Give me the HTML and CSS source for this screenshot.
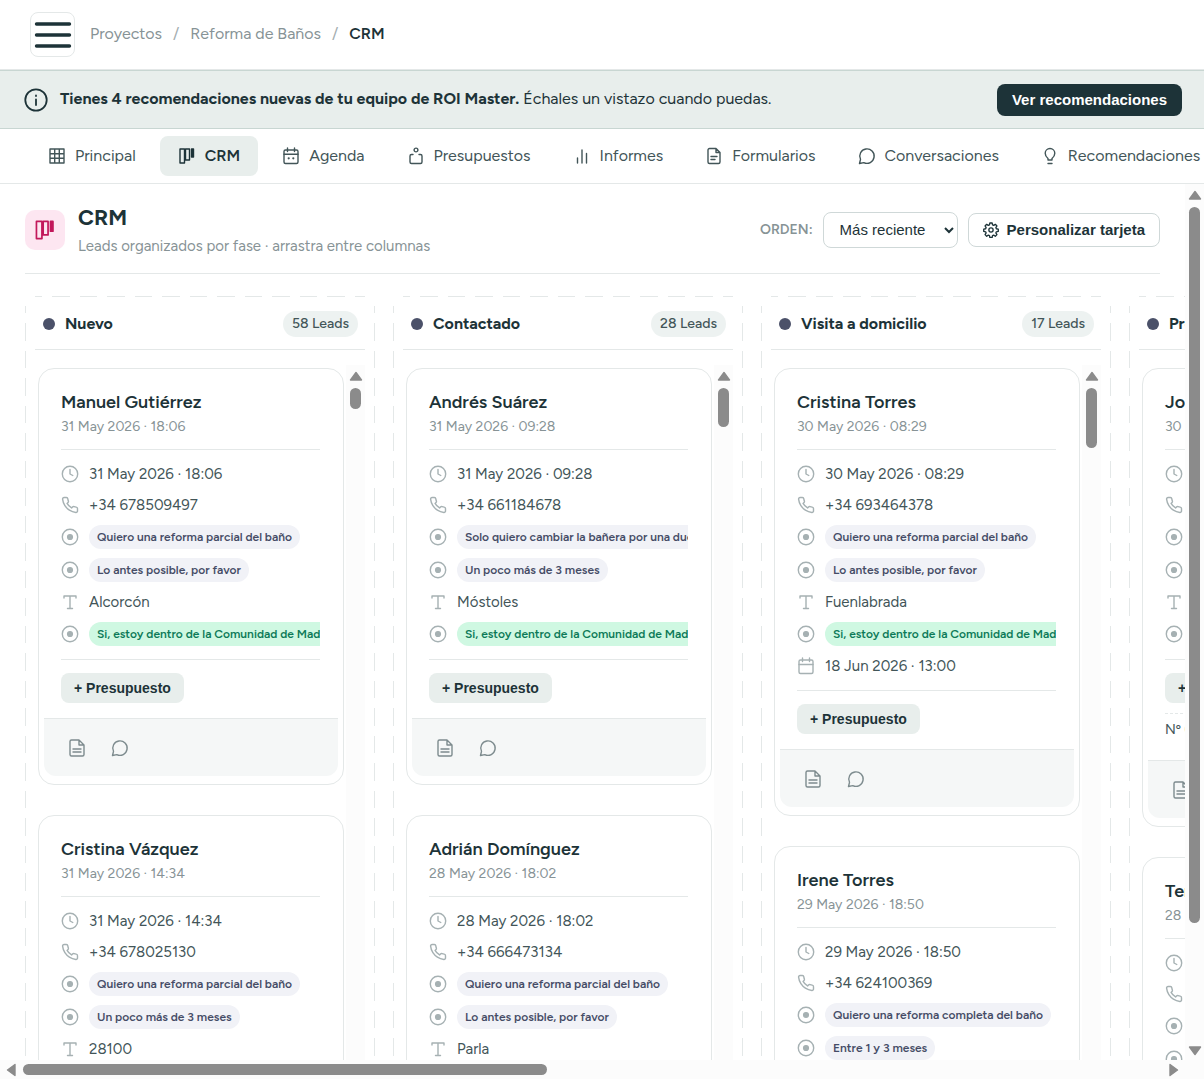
FILE: index.html
```html
<!DOCTYPE html>
<html lang="es">
<head>
<meta charset="utf-8">
<meta name="viewport" content="width=device-width, initial-scale=1">
<title>CRM · Reforma de Baños</title>
<link rel="stylesheet" href="styles.css">
</head>
<body>
<svg class="sprite" aria-hidden="true">
  <symbol id="i-grid" viewBox="0 0 18 18"><path d="M2 2h14v14H2zM2 6.700h14M2 11.300h14M6.700 2v14M11.300 2v14"/></symbol>
  <symbol id="i-board" viewBox="0 0 18 18"><path d="M2 2h4.500v14H2zM7.500 2h4v11h-4z"/><path class="solid" d="M13.500 2h2v8h-2z"/></symbol>
  <symbol id="i-agenda" viewBox="0 0 18 18"><rect x="2" y="3" width="14" height="13.500" rx="1.500"/><path d="M2 7.200h14M5.500 1v3.500M12.500 1v3.500"/><path class="dots" d="M6.700 11.300h.01M11.300 11.300h.01"/></symbol>
  <symbol id="i-budget" viewBox="0 0 18 18"><circle cx="9" cy="3" r="1.900"/><path d="M6 7.500H4.500a1.500 1.500 0 0 0-1.500 1.500v6a1.500 1.500 0 0 0 1.500 1.500h9a1.500 1.500 0 0 0 1.500-1.500v-6a1.500 1.500 0 0 0-1.500-1.500H12"/></symbol>
  <symbol id="i-chart" viewBox="0 0 18 18"><path d="M4.500 11v5M9 3v13M13.500 6.500V16"/></symbol>
  <symbol id="i-doc" viewBox="0 0 18 18"><path d="M11 1.500H4.500A1.500 1.500 0 0 0 3 3v12a1.500 1.500 0 0 0 1.500 1.500h9A1.500 1.500 0 0 0 15 15V5.500zM11 1.500v4h4M6 9.500h6M6 12.500h4"/></symbol>
  <symbol id="i-file" viewBox="0 0 18 18"><path d="M11 1H3.500A1.500 1.500 0 0 0 2 2.500v13A1.500 1.500 0 0 0 3.500 17h11a1.500 1.500 0 0 0 1.500-1.500V6zM11 1v5h5M5 10h8M5 13h8"/></symbol>
  <symbol id="i-chat" viewBox="0 0 18 18"><path d="M1.500 16.500l1-4.200A7.200 7.200 0 1 1 5.800 15.600z"/></symbol>
  <symbol id="i-bulb" viewBox="0 0 18 18"><path d="M7 13v-1.500C5.500 10.300 4.200 8.700 4.200 6.300a4.800 4.800 0 0 1 9.600 0c0 2.400-1.300 4-2.800 5.200V13zM7 16.500h4"/></symbol>
  <symbol id="i-info" viewBox="0 0 24 24"><circle cx="12" cy="12" r="10.700"/><path d="M12 11.500v5.500M12 7.500v.5"/></symbol>
  <symbol id="i-menu" viewBox="0 0 38 38"><path d="M2.500 8h33M2.500 19h33M2.500 30h33"/></symbol>
  <symbol id="i-clock" viewBox="0 0 18 18"><circle cx="9" cy="9" r="7.700"/><path d="M9 4.500V9l2.800 1.500"/></symbol>
  <symbol id="i-phone" viewBox="0 0 24 24"><path class="bold" d="M22 16.920v3a2 2 0 0 1-2.180 2 19.790 19.790 0 0 1-8.630-3.070 19.500 19.500 0 0 1-6-6 19.790 19.790 0 0 1-3.070-8.670A2 2 0 0 1 4.110 2h3a2 2 0 0 1 2 1.720 12.840 12.840 0 0 0 .7 2.810 2 2 0 0 1-.45 2.110L8.090 9.910a16 16 0 0 0 6 6l1.270-1.270a2 2 0 0 1 2.110-.45 12.840 12.840 0 0 0 2.810.7A2 2 0 0 1 22 16.920z"/></symbol>
  <symbol id="i-radio" viewBox="0 0 18 18"><circle cx="9" cy="9" r="7.700"/><circle class="solid" cx="9" cy="9" r="2.400"/></symbol>
  <symbol id="i-type" viewBox="0 0 18 18"><path d="M3 5V3h12v2M9 3v12.500M6.500 15.500h5"/></symbol>
  <symbol id="i-date" viewBox="0 0 18 18"><rect x="2" y="3" width="14" height="13.500" rx="1.500"/><path d="M2 7.500h14M5.500 1v3.500M12.500 1v3.500"/></symbol>
  <symbol id="i-gear" viewBox="0 0 24 24"><circle cx="12" cy="12" r="3.200"/><path d="M10.300 1.500h3.400l.6 2.900 1.700.7 2.500-1.600 2.400 2.400-1.600 2.500.7 1.700 2.900.6v3.400l-2.900.6-.7 1.700 1.600 2.500-2.400 2.400-2.500-1.600-1.700.7-.6 2.900h-3.400l-.6-2.900-1.700-.7-2.500 1.600-2.400-2.400 1.600-2.500-.7-1.700-2.900-.6v-3.400l2.900-.6.7-1.700-1.600-2.500 2.400-2.400L8 5.100l1.700-.7z"/></symbol>
  <symbol id="i-arrow" viewBox="0 0 14 10"><path d="M7 1.500L12.500 9h-11z"/></symbol>
</svg>

<header class="topbar">
  <button class="menu-btn" type="button" aria-label="Menú"><svg><use href="#i-menu"/></svg></button>
  <nav class="crumbs" aria-label="Ruta">
    <a href="#">Proyectos</a><span class="sep">/</span><a href="#">Reforma de Baños</a><span class="sep">/</span><strong>CRM</strong>
  </nav>
</header>

<section class="notice">
  <svg class="notice-icon"><use href="#i-info"/></svg>
  <p><strong>Tienes 4 recomendaciones nuevas de tu equipo de ROI Master.</strong> Échales un vistazo cuando puedas.</p>
  <button class="btn-dark" type="button">Ver recomendaciones</button>
</section>

<nav class="tabs" aria-label="Secciones">
  <a href="#"><svg><use href="#i-grid"/></svg>Principal</a>
  <a href="#" class="active" aria-current="page"><svg><use href="#i-board"/></svg>CRM</a>
  <a href="#"><svg><use href="#i-agenda"/></svg>Agenda</a>
  <a href="#"><svg><use href="#i-budget"/></svg>Presupuestos</a>
  <a href="#"><svg><use href="#i-chart"/></svg>Informes</a>
  <a href="#"><svg><use href="#i-doc"/></svg>Formularios</a>
  <a href="#"><svg><use href="#i-chat"/></svg>Conversaciones</a>
  <a href="#"><svg><use href="#i-bulb"/></svg>Recomendaciones</a>
</nav>

<div class="workspace">
  <main class="view">
    <header class="page-head">
      <span class="page-icon"><svg><use href="#i-board"/></svg></span>
      <div class="page-title">
        <h1>CRM</h1>
        <p>Leads organizados por fase · arrastra entre columnas</p>
      </div>
      <div class="page-tools">
        <label for="orden">ORDEN:</label>
        <select id="orden"><option>Más reciente</option><option>Más antiguo</option></select>
        <button class="btn-light" type="button"><svg><use href="#i-gear"/></svg>Personalizar tarjeta</button>
      </div>
    </header>

    <div class="board">
      <section class="column">
        <header class="column-head"><span class="dot"></span><h2>Nuevo</h2><span class="count">58 Leads</span></header>
        <div class="column-body">
          <div class="cards">
            <article class="card">
              <div class="card-main">
                <h3>Manuel Gutiérrez</h3>
                <p class="when">31 May 2026 · 18:06</p>
                <ul class="fields">
                  <li><svg><use href="#i-clock"/></svg>31 May 2026 · 18:06</li>
                  <li><svg><use href="#i-phone"/></svg>+34 678509497</li>
                  <li><svg><use href="#i-radio"/></svg><span class="pill">Quiero una reforma parcial del baño</span></li>
                  <li><svg><use href="#i-radio"/></svg><span class="pill">Lo antes posible, por favor</span></li>
                  <li><svg><use href="#i-type"/></svg>Alcorcón</li>
                  <li><svg><use href="#i-radio"/></svg><span class="pill green">Si, estoy dentro de la Comunidad de Madrid</span></li>
                </ul>
                <div class="quote"><button type="button">+ Presupuesto</button></div>
              </div>
              <footer class="card-foot"><button type="button" aria-label="Notas"><svg><use href="#i-file"/></svg></button><button type="button" aria-label="Chat"><svg><use href="#i-chat"/></svg></button></footer>
            </article>
            <article class="card">
              <div class="card-main">
                <h3>Cristina Vázquez</h3>
                <p class="when">31 May 2026 · 14:34</p>
                <ul class="fields">
                  <li><svg><use href="#i-clock"/></svg>31 May 2026 · 14:34</li>
                  <li><svg><use href="#i-phone"/></svg>+34 678025130</li>
                  <li><svg><use href="#i-radio"/></svg><span class="pill">Quiero una reforma parcial del baño</span></li>
                  <li><svg><use href="#i-radio"/></svg><span class="pill">Un poco más de 3 meses</span></li>
                  <li><svg><use href="#i-type"/></svg>28100</li>
                </ul>
              </div>
            </article>
          </div>
          <div class="scroll-v" aria-hidden="true"><svg class="arrow"><use href="#i-arrow"/></svg><div class="track"><div class="thumb" style="height:21px"></div></div></div>
        </div>
      </section>

      <section class="column">
        <header class="column-head"><span class="dot"></span><h2>Contactado</h2><span class="count">28 Leads</span></header>
        <div class="column-body">
          <div class="cards">
            <article class="card">
              <div class="card-main">
                <h3>Andrés Suárez</h3>
                <p class="when">31 May 2026 · 09:28</p>
                <ul class="fields">
                  <li><svg><use href="#i-clock"/></svg>31 May 2026 · 09:28</li>
                  <li><svg><use href="#i-phone"/></svg>+34 661184678</li>
                  <li><svg><use href="#i-radio"/></svg><span class="pill">Solo quiero cambiar la bañera por una ducha</span></li>
                  <li><svg><use href="#i-radio"/></svg><span class="pill">Un poco más de 3 meses</span></li>
                  <li><svg><use href="#i-type"/></svg>Móstoles</li>
                  <li><svg><use href="#i-radio"/></svg><span class="pill green">Si, estoy dentro de la Comunidad de Madrid</span></li>
                </ul>
                <div class="quote"><button type="button">+ Presupuesto</button></div>
              </div>
              <footer class="card-foot"><button type="button" aria-label="Notas"><svg><use href="#i-file"/></svg></button><button type="button" aria-label="Chat"><svg><use href="#i-chat"/></svg></button></footer>
            </article>
            <article class="card">
              <div class="card-main">
                <h3>Adrián Domínguez</h3>
                <p class="when">28 May 2026 · 18:02</p>
                <ul class="fields">
                  <li><svg><use href="#i-clock"/></svg>28 May 2026 · 18:02</li>
                  <li><svg><use href="#i-phone"/></svg>+34 666473134</li>
                  <li><svg><use href="#i-radio"/></svg><span class="pill">Quiero una reforma parcial del baño</span></li>
                  <li><svg><use href="#i-radio"/></svg><span class="pill">Lo antes posible, por favor</span></li>
                  <li><svg><use href="#i-type"/></svg>Parla</li>
                </ul>
              </div>
            </article>
          </div>
          <div class="scroll-v" aria-hidden="true"><svg class="arrow"><use href="#i-arrow"/></svg><div class="track"><div class="thumb" style="height:39px"></div></div></div>
        </div>
      </section>

      <section class="column">
        <header class="column-head"><span class="dot"></span><h2>Visita a domicilio</h2><span class="count">17 Leads</span></header>
        <div class="column-body">
          <div class="cards">
            <article class="card">
              <div class="card-main">
                <h3>Cristina Torres</h3>
                <p class="when">30 May 2026 · 08:29</p>
                <ul class="fields">
                  <li><svg><use href="#i-clock"/></svg>30 May 2026 · 08:29</li>
                  <li><svg><use href="#i-phone"/></svg>+34 693464378</li>
                  <li><svg><use href="#i-radio"/></svg><span class="pill">Quiero una reforma parcial del baño</span></li>
                  <li><svg><use href="#i-radio"/></svg><span class="pill">Lo antes posible, por favor</span></li>
                  <li><svg><use href="#i-type"/></svg>Fuenlabrada</li>
                  <li><svg><use href="#i-radio"/></svg><span class="pill green">Si, estoy dentro de la Comunidad de Madrid</span></li>
                  <li><svg><use href="#i-date"/></svg>18 Jun 2026 · 13:00</li>
                </ul>
                <div class="quote"><button type="button">+ Presupuesto</button></div>
              </div>
              <footer class="card-foot"><button type="button" aria-label="Notas"><svg><use href="#i-file"/></svg></button><button type="button" aria-label="Chat"><svg><use href="#i-chat"/></svg></button></footer>
            </article>
            <article class="card">
              <div class="card-main">
                <h3>Irene Torres</h3>
                <p class="when">29 May 2026 · 18:50</p>
                <ul class="fields">
                  <li><svg><use href="#i-clock"/></svg>29 May 2026 · 18:50</li>
                  <li><svg><use href="#i-phone"/></svg>+34 624100369</li>
                  <li><svg><use href="#i-radio"/></svg><span class="pill">Quiero una reforma completa del baño</span></li>
                  <li><svg><use href="#i-radio"/></svg><span class="pill">Entre 1 y 3 meses</span></li>
                </ul>
              </div>
            </article>
          </div>
          <div class="scroll-v" aria-hidden="true"><svg class="arrow"><use href="#i-arrow"/></svg><div class="track"><div class="thumb" style="height:60px"></div></div></div>
        </div>
      </section>

      <section class="column">
        <header class="column-head"><span class="dot"></span><h2>Presupuestado</h2></header>
        <div class="column-body">
          <div class="cards">
            <article class="card">
              <div class="card-main">
                <h3>Jorge</h3>
                <p class="when">30 May 2026</p>
                <ul class="fields">
                  <li><svg><use href="#i-clock"/></svg></li>
                  <li><svg><use href="#i-phone"/></svg></li>
                  <li><svg><use href="#i-radio"/></svg><span class="pill">&nbsp;</span></li>
                  <li><svg><use href="#i-radio"/></svg><span class="pill">&nbsp;</span></li>
                  <li><svg><use href="#i-type"/></svg></li>
                  <li><svg><use href="#i-radio"/></svg><span class="pill green">&nbsp;</span></li>
                </ul>
                <div class="quote"><button type="button">+ Presupuesto</button></div>
                <p class="quote-no">Nº 6</p>
              </div>
              <footer class="card-foot"><button type="button" aria-label="Notas"><svg><use href="#i-file"/></svg></button><button type="button" aria-label="Chat"><svg><use href="#i-chat"/></svg></button></footer>
            </article>
            <article class="card">
              <div class="card-main">
                <h3>Teresa</h3>
                <p class="when">28 May 2026</p>
                <ul class="fields">
                  <li><svg><use href="#i-clock"/></svg></li>
                  <li><svg><use href="#i-phone"/></svg></li>
                  <li><svg><use href="#i-radio"/></svg><span class="pill">&nbsp;</span></li>
                  <li><svg><use href="#i-radio"/></svg><span class="pill">&nbsp;</span></li>
                </ul>
              </div>
            </article>
          </div>
        </div>
      </section>
    </div>
  </main>
  <div class="scroll-v" aria-hidden="true"><svg class="arrow"><use href="#i-arrow"/></svg><div class="track"><div class="thumb" style="height:86%"></div></div><svg class="arrow down"><use href="#i-arrow"/></svg></div>
  <div class="scroll-h" aria-hidden="true"><svg class="arrow left"><use href="#i-arrow"/></svg><div class="track"><div class="thumb" style="width:46%"></div></div><svg class="arrow right"><use href="#i-arrow"/></svg></div>
</div>
</body>
</html>
```
FILE: styles.css
```css
:root {
  --ink: #1d3338;
  --body: #425558;
  --muted: #879396;
  --line: #e4e8e8;
  --tint: #e8eeec;
  --ui: "Liberation Sans", Arial, sans-serif;
}

* { box-sizing: border-box; }

body {
  margin: 0;
  height: 100vh;
  display: flex;
  flex-direction: column;
  overflow: hidden;
  background: #fff;
  color: var(--ink);
  font: 16px/24px Figtree, Lato, sans-serif;
}

h1, h2, h3, p, ul { margin: 0; padding: 0; }
a { color: inherit; text-decoration: none; }
button { font-family: var(--ui); cursor: pointer; }
.sprite { position: absolute; width: 0; height: 0; }
svg {
  flex: none;
  fill: none;
  stroke: currentColor;
  stroke-width: 1.4;
  stroke-linecap: round;
  stroke-linejoin: round;
}
.solid { fill: currentColor; }
.dots { stroke-width: 2.2; }
.bold { stroke-width: 1.9; }

/* Top bar */
.topbar {
  flex: none;
  height: 70px;
  display: flex;
  align-items: center;
  gap: 15px;
  padding: 0 30px;
  border-bottom: 1px solid var(--line);
}
.menu-btn {
  width: 45px;
  height: 45px;
  padding: 0;
  display: grid;
  place-items: center;
  background: #fff;
  border: 1px solid var(--line);
  border-radius: 8px;
  color: var(--ink);
}
.menu-btn svg { width: 38px; height: 38px; stroke-width: 3.4; }
.crumbs { display: flex; gap: 11px; padding-bottom: 2px; color: var(--muted); }
.crumbs .sep { color: #a3adaf; }
.crumbs strong { color: var(--ink); font-weight: 600; }

/* Notice */
.notice {
  flex: none;
  height: 59px;
  display: flex;
  align-items: center;
  gap: 12px;
  padding: 0 22px 0 24px;
  background: var(--tint);
  border: solid #c8d6d2;
  border-width: 1px 0;
}
.notice-icon { width: 24px; height: 24px; stroke-width: 1.8; }
.notice p { flex: 1; padding-bottom: 2px; white-space: nowrap; }
.btn-dark {
  height: 32px;
  padding: 0 15px;
  background: var(--ink);
  color: #fff;
  border: 0;
  border-radius: 8px;
  font-size: 15px;
  font-weight: 700;
}

/* Tabs */
.tabs {
  flex: none;
  height: 55px;
  display: flex;
  align-items: center;
  gap: 6px;
  padding: 0 30px;
  overflow: hidden;
  border-bottom: 1px solid var(--line);
  color: var(--body);
}
.tabs a {
  flex: none;
  height: 40px;
  display: flex;
  align-items: center;
  gap: 9px;
  padding: 0 18px;
  border-radius: 8px;
}
.tabs svg { width: 18px; height: 18px; }
.tabs .active { background: var(--tint); color: var(--ink); font-weight: 600; }

/* Scrolling work area */
.workspace {
  flex: 1;
  min-height: 0;
  display: grid;
  grid-template: minmax(0, 1fr) 19px / minmax(0, 1fr) 19px;
  background: #fcfcfc;
}
.view { overflow: hidden; padding: 0 25px; background: #fff; }

.page-head {
  height: 90px;
  display: flex;
  align-items: center;
  gap: 13px;
  padding-top: 2px;
  border-bottom: 1px solid var(--line);
}
.page-icon {
  width: 40px;
  height: 40px;
  display: grid;
  place-items: center;
  border-radius: 10px;
  background: #fde6f1;
  color: #c2185b;
}
.page-icon svg { width: 22px; height: 22px; }
.page-title { flex: 1; }
.page-title h1 { font-size: 22px; line-height: 32px; }
.page-title p { font-size: 15px; color: var(--muted); }
.page-tools { display: flex; align-items: center; gap: 10px; }
.page-tools label { font-size: 14px; font-weight: 600; color: var(--muted); }
.page-tools select {
  width: 135px;
  height: 36px;
  padding: 0 0 0 12px;
  background: #fff;
  color: var(--ink);
  border: 1px solid #cfd8d8;
  border-radius: 8px;
  font: 15px var(--ui);
}
.btn-light {
  height: 34px;
  display: flex;
  align-items: center;
  gap: 8px;
  padding: 0 14px;
  background: #fff;
  color: var(--ink);
  border: 1px solid #cfd8d8;
  border-radius: 8px;
  font-size: 15px;
  font-weight: 700;
}
.btn-light svg { width: 16px; height: 16px; stroke-width: 2; }

/* Board */
.board {
  display: flex;
  align-items: flex-start;
  gap: 18px;
  padding-top: 22px;
}
.column {
  --dash: #e4e8e8 0 7px, transparent 7px 17px, #e4e8e8 17px 35px, transparent 35px 45px, #e4e8e8 45px 55px;
  flex: none;
  width: 350px;
  min-height: 900px;
  padding: 0 10px;
  background:
    repeating-linear-gradient(90deg, var(--dash)) 10px 0 / 330px 1px no-repeat,
    repeating-linear-gradient(180deg, var(--dash)) 0 10px / 1px 100% no-repeat,
    repeating-linear-gradient(180deg, var(--dash)) 100% 10px / 1px 100% no-repeat;
}
.column-head {
  height: 54px;
  display: flex;
  align-items: center;
  gap: 10px;
  padding: 2px 7px 0 8px;
  border-bottom: 1px solid var(--line);
}
.dot { width: 12px; height: 12px; border-radius: 50%; background: #4b5169; }
.column-head h2 { flex: 1; font-size: 16px; font-weight: 700; white-space: nowrap; }
.count {
  padding: 0 9px;
  border-radius: 13px;
  background: #edf2f1;
  color: var(--body);
  font-size: 14px;
  font-weight: 500;
  line-height: 26px;
}
.column-body { display: flex; justify-content: space-between; min-height: 845px; padding-top: 15px; }
.cards {
  width: 309px;
  display: grid;
  grid-template-columns: minmax(0, 1fr);
  align-content: start;
  gap: 30px;
  padding: 3px 0 0 3px;
}

.card { padding: 15px 5px 8px; border: 1px solid var(--line); border-radius: 16px; background: #fff; }
.card-main { padding: 6px 18px 15px 17px; }
.card h3 { margin-bottom: 1px; font-size: 18px; font-weight: 600; line-height: 24px; }
.when { color: var(--muted); font-size: 14px; }
.fields {
  display: grid;
  gap: 9px;
  margin-top: 10px;
  padding-top: 13px;
  border-top: 1px solid var(--line);
  list-style: none;
  overflow: hidden;
  color: var(--body);
  font-size: 15px;
  line-height: 22px;
}
.fields li { display: flex; align-items: center; gap: 10px; min-height: 22px; white-space: nowrap; }
.fields svg { width: 18px; height: 18px; color: #a6b1b3; }
.pill {
  padding: 0 8px;
  border-radius: 12px;
  background: #f1f2f7;
  color: #454c66;
  font-size: 12px;
  font-weight: 600;
  line-height: 24px;
}
.pill.green { background: #cff8e2; color: #0c7a58; }
.quote { margin-top: 13px; padding-top: 13px; border-top: 1px solid var(--line); }
.quote button {
  display: block;
  height: 30px;
  padding: 0 13px;
  border: 0;
  border-radius: 8px;
  background: var(--tint);
  color: var(--ink);
  font-size: 14px;
  font-weight: 700;
}
.quote-no {
  margin-top: 10px;
  padding: 4px 0 3px;
  border-top: 1px dashed var(--line);
  color: var(--body);
  font-size: 14px;
}
.card-foot {
  height: 58px;
  display: flex;
  align-items: center;
  gap: 25px;
  padding: 0 24px;
  background: #f5f7f7;
  border-top: 1px solid var(--line);
  border-radius: 0 0 12px 12px;
}
.card-foot button { display: flex; padding: 0; border: 0; background: none; color: #7d8b8e; }
.card-foot svg { width: 18px; height: 18px; }

/* Scroll bars */
.scroll-v, .scroll-h { display: flex; align-items: center; background: #fcfcfc; color: #8b8b8b; }
.scroll-v { width: 19px; flex-direction: column; padding: 6px 0 4px; }
.scroll-h { padding: 0 4px; }
.arrow { width: 14px; height: 10px; fill: currentColor; }
.down { transform: rotate(180deg); }
.left { transform: rotate(-90deg); }
.right { transform: rotate(90deg); }
.track { flex: 1; }
.scroll-v .track { padding: 7px 0; }
.scroll-h .track { padding: 0 5px; }
.thumb { border-radius: 6px; background: #8b8b8b; }
.scroll-v .thumb { width: 11px; }
.scroll-h .thumb { height: 11px; }
```
